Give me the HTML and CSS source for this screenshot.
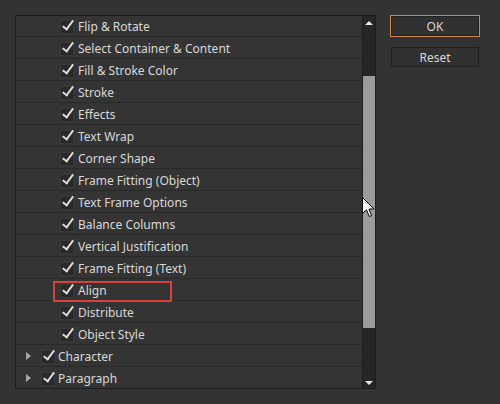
FILE: index.html
```html
<!DOCTYPE html>
<html>
<head>
<meta charset="utf-8">
<link rel="stylesheet" href="styles.css">
</head>
<body>
<div class="dialog">
  <div class="list">
    <div class="rows">
      <div class="row first"><span class="cb"></span><span class="lbl">Flip &amp; Rotate</span></div>
      <div class="row"><span class="cb"></span><span class="lbl">Select Container &amp; Content</span></div>
      <div class="row"><span class="cb"></span><span class="lbl">Fill &amp; Stroke Color</span></div>
      <div class="row"><span class="cb"></span><span class="lbl">Stroke</span></div>
      <div class="row"><span class="cb"></span><span class="lbl">Effects</span></div>
      <div class="row"><span class="cb"></span><span class="lbl">Text Wrap</span></div>
      <div class="row"><span class="cb"></span><span class="lbl">Corner Shape</span></div>
      <div class="row"><span class="cb"></span><span class="lbl">Frame Fitting (Object)</span></div>
      <div class="row"><span class="cb"></span><span class="lbl">Text Frame Options</span></div>
      <div class="row"><span class="cb"></span><span class="lbl">Balance Columns</span></div>
      <div class="row"><span class="cb"></span><span class="lbl">Vertical Justification</span></div>
      <div class="row"><span class="cb"></span><span class="lbl">Frame Fitting (Text)</span></div>
      <div class="row highlight"><span class="cb"></span><span class="lbl">Align</span><span class="redbox"></span></div>
      <div class="row"><span class="cb"></span><span class="lbl">Distribute</span></div>
      <div class="row"><span class="cb"></span><span class="lbl">Object Style</span></div>
      <div class="row top"><span class="tri"></span><span class="cb"></span><span class="lbl">Character</span></div>
      <div class="row top last"><span class="tri"></span><span class="cb"></span><span class="lbl">Paragraph</span></div>
    </div>
    <div class="scrollbar">
      <div class="sb-up"><span class="arrow-up"></span></div>
      <div class="sb-thumb"></div>
      <div class="sb-rest"><span class="arrow-down"></span></div>
    </div>
    <svg class="cursor" width="13" height="21" viewBox="0 0 13 21">
      <path d="M0.5 0.5 L0.5 16.5 L4.5 12.8 L7.3 19.5 L9.6 18.5 L6.9 12 L12 12 Z" fill="#ffffff" stroke="#000000" stroke-width="1" stroke-linejoin="miter"/>
    </svg>
  </div>
  <div class="buttons">
    <button class="btn ok">OK</button>
    <button class="btn reset">Reset</button>
  </div>
</div>
</body>
</html>
```
FILE: styles.css
```css
* { box-sizing: border-box; }
html, body { margin: 0; padding: 0; }
body {
  width: 500px;
  height: 404px;
  background: #333333;
  font-family: "Noto Sans", "Open Sans", sans-serif;
  font-size: 12px;
  color: #d8d8d8;
  overflow: hidden;
}
.dialog {
  display: flex;
  align-items: flex-start;
  padding: 15px 0 0 15px;
  gap: 14px;
}
.list {
  position: relative;
  display: flex;
  width: 361px;
  border: 1px solid #1d1d1d;
  background: #343434;
}
.rows { flex: 1; }
.row {
  position: relative;
  display: flex;
  align-items: center;
  height: 22px;
  padding-left: 45px;
  border-bottom: 1px solid #282828;
}
.row.first { height: 21px; }
.row.last { border-bottom: none; height: 21px; }
.row.top { padding-left: 10px; }
.cb {
  position: relative;
  width: 12px;
  height: 12px;
  margin-right: 5px;
  margin-top: 2px;
  background: #2a2a2a;
  border: 1px solid #262626;
  box-shadow: 0 0 0 1px #3a3a3a;
  flex: none;
}
.cb::after {
  content: "";
  position: absolute;
  left: 3px;
  top: -4px;
  width: 4px;
  height: 10px;
  border-right: 2px solid #dedede;
  border-bottom: 2px solid #dedede;
  transform: rotate(36deg);
}
.row.top .cb { margin-right: 4px; }
.tri {
  width: 0;
  height: 0;
  border-top: 4px solid transparent;
  border-bottom: 4px solid transparent;
  border-left: 5px solid #a8a8a8;
  margin-right: 11px;
  flex: none;
}
.lbl { white-space: nowrap; line-height: 1; padding-top: 2px; }
.redbox {
  position: absolute;
  left: 37px;
  top: 2px;
  width: 119px;
  height: 21px;
  border: 2px solid #d8413f;
}
.scrollbar {
  width: 13px;
  border-left: 1px solid #1d1d1d;
  background: #262626;
  display: flex;
  flex-direction: column;
}
.sb-up { height: 60px; display: flex; justify-content: center; padding-top: 5px; }
.sb-thumb { height: 252px; background: #9b9b9b; }
.sb-rest { flex: 1; display: flex; justify-content: center; align-items: flex-end; padding-bottom: 3px; }
.arrow-up {
  width: 0; height: 0;
  border-left: 4px solid transparent;
  border-right: 4px solid transparent;
  border-bottom: 4px solid #e8e8e8;
}
.arrow-down {
  width: 0; height: 0;
  border-left: 4px solid transparent;
  border-right: 4px solid transparent;
  border-top: 4px solid #e8e8e8;
}
.cursor { position: absolute; left: 346px; top: 181px; }
.buttons {
  display: flex;
  flex-direction: column;
  align-items: center;
  width: 90px;
  gap: 10px;
}
.btn {
  font-family: "Noto Sans", "Open Sans", sans-serif;
  font-size: 12px;
  color: #d8d8d8;
  background: #303030;
  padding: 0;
  cursor: default;
}
.ok {
  width: 90px;
  height: 22px;
  border: 1px solid #d1873f;
  box-shadow: inset 0 0 0 1px #222;
}
.reset {
  width: 88px;
  height: 20px;
  border: 1px solid #1f1f1f;
  background: #313131;
}
```
